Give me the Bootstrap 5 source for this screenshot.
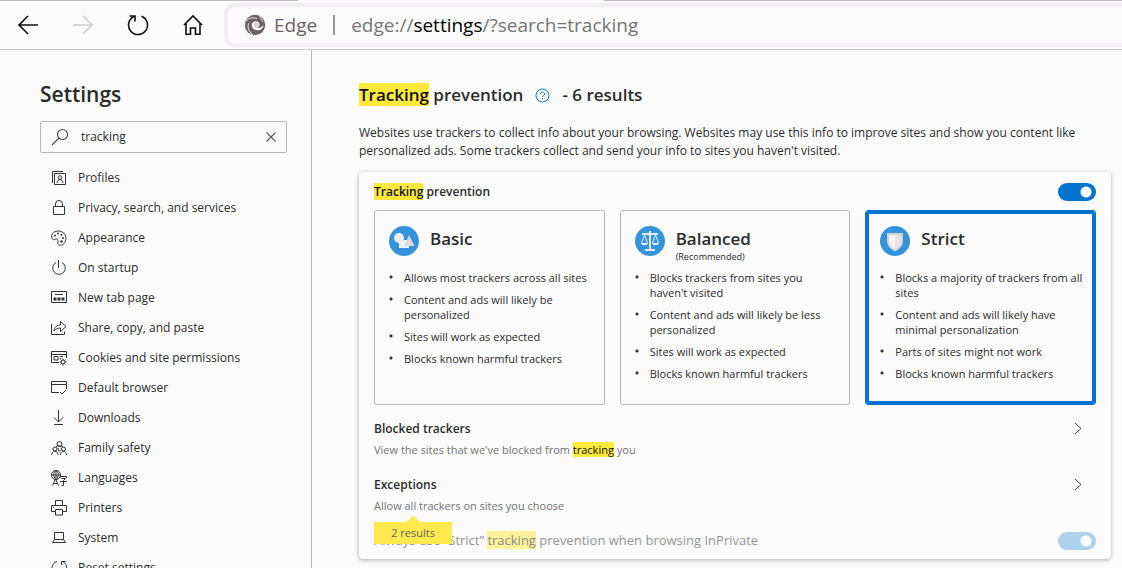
<!DOCTYPE html>
<html lang="en">
<head>
<meta charset="utf-8">
<meta name="viewport" content="width=device-width, initial-scale=1">
<title>Settings</title>
<link rel="stylesheet" href="https://cdn.jsdelivr.net/npm/bootstrap@5.3.0/dist/css/bootstrap.min.css">
<style>
  :root { --ink: #2b2b2b; --soft: #737373; --accent: #0072cf; --hit: #ffe93b; }
  html, body { height: 100%; }
  body { font-family: "Open Sans", "Noto Sans", sans-serif; font-size: 12px; line-height: 18px; color: var(--ink); background: #fbfbfb; }
  svg { display: block; flex: none; fill: none; }
  svg:not([stroke]) { stroke: currentColor; }

  .tab-edge { height: 1px; }
  .tab-edge .line { background: #bdbdbd; }
  .tab-edge .line-left { width: 298px; }
  .tab-edge .gap { width: 306px; }
  .toolbar { height: 49px; border-bottom: 1px solid #ccc; }
  .tool-btn { width: 55px; height: 48px; color: #111; padding: 0; border: 0; background: none; display: flex; align-items: center; justify-content: center; }
  .tool-btn:disabled { color: #ccc; }
  .address { height: 44px; border: 4px solid #f1edf1; border-right: 0; border-radius: 10px 0 0 10px; font-size: 19px; line-height: 28px; color: #757575; padding-left: 16px; margin-left: 4px; }
  .address .site { color: #6b6067; }
  .address .bar { width: 2px; height: 20px; background: #949494; }
  .address b { font-weight: 400; color: #000; }

  .side { width: 312px; border-right: 1px solid #b8b8b8; padding: 30px 24px 0 40px; }
  .side h1 { font-size: 21px; line-height: 28px; font-weight: 600; margin: 0 0 13px; }
  .search { height: 32px; border: 1px solid #b8b8b8; border-radius: 2px; padding: 0 9px 0 10px; }
  .search input { font-size: 12px; color: var(--ink); border: 0; background: none; outline: 0; padding: 0; min-width: 0; }
  .search button { border: 0; background: none; padding: 0; color: #555; }
  .side nav { margin-top: 10px; }
  .side nav a { height: 30px; color: var(--ink); text-decoration: none; gap: 11px; padding-left: 11px; }
  .side nav svg { stroke: #333; }

  .content { padding: 32px 11px 0 47px; }
  .content h2 { font-size: 17px; line-height: 26px; font-weight: 600; margin: 0 0 16px; }
  .hit { background: var(--hit); color: #111; padding: 0; }
  .panel { border-radius: 4px; box-shadow: 0 1px 4px rgba(0,0,0,.32); padding: 0 15px 8px; margin-top: 12px; }
  .panel-head { padding: 9px 0 8px; }
  .caption { font-size: 12px; line-height: 21px; font-weight: 600; }
  .form-switch .form-check-input { width: 38px; height: 18px; margin: 0; float: none; border: 0; background-color: var(--accent); box-shadow: none; }
  .form-switch .form-check-input:checked { background-image: radial-gradient(circle at 28px 9px, #fff 5px, transparent 6px); background-position: 0 0; background-size: 100% 100%; }
  .form-switch .form-check-input:disabled { opacity: .3; }

  .levels { display: grid; grid-template-columns: repeat(3, 1fr); gap: 15px; }
  .level { border: 1px solid #b8b8b8; border-radius: 3px; min-height: 195px; padding: 15px 8px 15px 14px; cursor: pointer; }
  .level:has(input:checked) { border-color: var(--accent); box-shadow: inset 0 0 0 3px var(--accent); }
  .level-head { min-height: 44px; gap: 11px; }
  .level-name { font-size: 17px; line-height: 25px; font-weight: 600; }
  .level-note { font-size: 9px; line-height: 11px; }
  .level ul { margin: 0; padding: 0; list-style: none; font-size: 11px; line-height: 15px; }
  .level li { padding-left: 15px; margin-bottom: 7px; background: radial-gradient(circle at 2px 7px, #333 1px, transparent 2px) no-repeat; }

  .entry { color: var(--ink); text-decoration: none; margin-bottom: 14px; }
  .levels + .entry { margin-top: 13px; }
  .entry-note { font-size: 11px; line-height: 21px; color: var(--soft); }
  .dimmed { font-size: 13px; line-height: 21px; opacity: .5; }
  .callout { left: 0; top: 48px; width: 78px; height: 22px; font-size: 11px; line-height: 22px; text-align: center; color: #666; background: #ffe94c; z-index: 1; }
  .callout::before { content: ""; position: absolute; left: 32px; top: -6px; border: 7px solid transparent; border-top: 0; border-bottom: 6px solid #ffe94c; }
  .page { min-height: 0; }
</style>
</head>
<body class="d-flex flex-column overflow-hidden">
<header>
  <div class="tab-edge d-flex"><div class="line line-left"></div><div class="gap"></div><div class="line flex-grow-1"></div></div>
  <div class="toolbar d-flex align-items-center">
    <button class="tool-btn" aria-label="Back"><svg width="22" height="22" stroke-width="1.6"><path d="M21 11H2M11 2L2 11l9 9"/></svg></button>
    <button class="tool-btn" aria-label="Forward" disabled><svg width="22" height="22" stroke-width="1.6"><path d="M1 11h19M11 2l9 9-9 9"/></svg></button>
    <button class="tool-btn" aria-label="Refresh"><svg width="22" height="22" stroke-width="1.6"><path d="M14.500 2.200a9.500 9.500 0 1 1-7.600.3M2.500 2h5.500v5.500"/></svg></button>
    <button class="tool-btn" aria-label="Home"><svg width="20" height="22" stroke-width="1.6"><path d="M1 11l9-9 9 9M3 9.500V20.200h4.500v-6.200h5v6.200H17V9.500"/></svg></button>
    <div class="address flex-grow-1 d-flex align-items-center">
      <svg width="22" height="22" viewBox="0 0 22 22" stroke="none"><circle cx="11" cy="11" r="10.200" fill="#6b6067"/><path d="M10.500 7.500c2.200-.8 4.600.4 5 2.600.3 1.800-.7 3.300-2.200 4 2.700 0 4.900-1.200 6.200-3.200-.2 3.300-3 5.700-6.400 5.300-3.100-.3-5.400-2.500-5.300-5.200.1-1.700 1.100-3 2.700-3.500z" fill="#fbfbfb"/><path d="M10.500 8.200c2.200-.8 4.200.7 4 2.700-.1 1.600-1.200 2.700-2.600 3.300-1.800-1-2.800-3.500-1.400-6z" fill="#6b6067" opacity=".25"/><path d="M2.500 7c2-3 6.500-4.200 10.500-2.200M4.600 9.500c-1.500 4 .3 8.300 3.900 10.700M15 2.500c2 1.300 3.200 3.300 3.400 5.500" stroke="#fbfbfb" stroke-width=".9"/></svg>
      <span class="site ms-2">Edge</span><span class="bar mx-3"></span><span>edge://<b>settings</b>/?search=tracking</span>
    </div>
  </div>
</header>
<div class="page d-flex flex-grow-1">
  <aside class="side flex-shrink-0">
    <h1>Settings</h1>
    <div class="search d-flex align-items-center">
      <svg class="me-2" width="18" height="18" stroke="#444" stroke-width="1.100"><circle cx="11.500" cy="6.500" r="5"/><path d="M8 10L1 17"/></svg>
      <input class="flex-grow-1 ms-1" type="text" value="tracking" aria-label="Search settings">
      <button aria-label="Clear search"><svg width="12" height="12" stroke-width="1.100"><path d="M1.500 1.500l9 9m0-9l-9 9"/></svg></button>
    </div>
    <nav>
      <a class="d-flex align-items-center" href="#"><svg width="16" height="16"><path d="M3.500 3.500h11v11h-11z"/><path d="M12 1.500H1.500V13" /><circle cx="9" cy="7.500" r="1.800"/><path d="M6 13c.2-4.500 5.800-4.500 6 0"/></svg>Profiles</a>
      <a class="d-flex align-items-center" href="#"><svg width="16" height="16"><path d="M2.500 6.500h11v8h-11zM4.500 6.500V4a3.500 3.500 0 0 1 7 0v2.500"/></svg>Privacy, search, and services</a>
      <a class="d-flex align-items-center" href="#"><svg width="16" height="16"><path d="M.8 5C2 .5 9-.2 12.700 3c3.600 3.500 2.500 9.500-1 11.700-3.200 1.500-5.400-.2-4.800-2.700.5-2.500-.6-3.700-2.600-2.700C2 10.500.2 9 .8 5z"/><g fill="#333" stroke="none"><circle cx="4" cy="5.500" r="1"/><circle cx="7" cy="3.500" r="1"/><circle cx="10.500" cy="4.800" r="1"/><circle cx="12" cy="8" r="1"/><circle cx="10.500" cy="11.500" r="1.200"/></g></svg>Appearance</a>
      <a class="d-flex align-items-center" href="#"><svg width="16" height="16"><path d="M5 2.500a6.300 6.300 0 1 0 6 0M7.500 0v8"/></svg>On startup</a>
      <a class="d-flex align-items-center" href="#"><svg width="16" height="16"><path d="M.5 1.500h15v11H.5zM4 4.500h8"/><path d="M2.500 9h3m1 0h3m1 0h3" stroke-width="3"/></svg>New tab page</a>
      <a class="d-flex align-items-center" href="#"><svg width="16" height="16"><path d="M.5 4v10.500h13v-3M3 11c.3-4 3-6 6.500-6V1.500L15 6.500l-5.500 5V8C6.500 8 4.500 9 3 11z"/></svg>Share, copy, and paste</a>
      <a class="d-flex align-items-center" href="#"><svg width="16" height="16"><path d="M8 12.500H.5v-11h15V8M.5 4.500h15M3 6.500h4v3.500H3zM9 6.500h3M9 8.500h1"/><circle cx="12" cy="12" r="2"/><path d="M12 8.500V10m0 4v1.500M8.700 12h1.500m4 0h1.500M9.500 9.500l1 1m3 3l1 1m0-5l-1 1m-3 3l-1 1"/></svg>Cookies and site permissions</a>
      <a class="d-flex align-items-center" href="#"><svg width="16" height="16"><path d="M8 12.500H.5v-11h15V9M.5 4.500h15M9 12l2 2 4-4"/></svg>Default browser</a>
      <a class="d-flex align-items-center" href="#"><svg width="16" height="16"><path d="M7.500 0v12M3 7.500L7.500 12 12 7.500M3 14.500h9"/></svg>Downloads</a>
      <a class="d-flex align-items-center" href="#"><svg width="16" height="16"><circle cx="8.500" cy="4" r="2.500"/><circle cx="4" cy="9" r="2"/><circle cx="12.500" cy="9" r="2"/><path d="M.7 15c0-5 6.300-5 6.300 0M9.500 15c0-5 6-5 6 0M5 6.500c2-1 5-1 7 .3M7 8l1 3.500 2-2"/></svg>Family safety</a>
      <a class="d-flex align-items-center" href="#"><svg width="16" height="16"><circle cx="5" cy="5" r="4.500"/><path d="M.5 5h9M5 .5v9M5 .5c-3 2-3 6 0 9M5 .5c3 2 3 6 0 9M1.500 15.500L4.500 9l3 6.500M2.500 13.500h4M9 8V6.500h6.500V8M10.500 8.500h4l-2 2v5h-2M9 11.500h7"/></svg>Languages</a>
      <a class="d-flex align-items-center" href="#"><svg width="16" height="16"><path d="M4.500 6V.5h7V6M4 11.500H.5v-6h15v6H12M4.500 9.500h7v5.500h-7zM2 7.500h1"/></svg>Printers</a>
      <a class="d-flex align-items-center" href="#"><svg width="16" height="16"><path d="M3.500 2.500h9v7h-9zM3.500 9.500L1.500 12.500h13l-2-3"/></svg>System</a>
      <a class="d-flex align-items-center" href="#"><svg width="16" height="16"><path d="M6 1.500A6.800 6.800 0 0 0 5 14.300M11.500 1.500A6.800 6.800 0 0 1 11 14.300M10.500 5V1.500h4"/></svg>Reset settings</a>
    </nav>
  </aside>

  <main class="content flex-grow-1">
    <h2 class="d-flex align-items-center"><span><mark class="hit">Tracking</mark> prevention</span>
      <a href="#" class="mx-2 px-1" aria-label="Help"><svg width="15" height="15" stroke="#0072cf"><circle cx="7.500" cy="7.500" r="6.500"/><path d="M5.500 6c0-2.700 4-2.600 4 0 0 1.500-2 1.500-2 3.200M7.500 10.200v1.300"/></svg></a>
      <span>- 6 results</span></h2>
    <p class="mb-0">Websites use trackers to collect info about your browsing. Websites may use this info to improve sites and show you content like personalized ads. Some trackers collect and send your info to sites you haven't visited.</p>
    <section class="panel">
      <div class="panel-head d-flex align-items-center justify-content-between form-switch">
        <label class="caption" for="prevent"><mark class="hit">Tracking</mark> prevention</label>
        <input class="form-check-input" type="checkbox" role="switch" id="prevent" checked>
      </div>
      <div class="levels">
        <label class="level">
          <input class="visually-hidden" type="radio" name="level">
          <span class="level-head d-flex"><svg width="30" height="30" stroke="none"><circle cx="15" cy="15" r="15" fill="#3394dd"/><circle cx="10" cy="12" r="5" fill="#f1eff3"/><path d="M10 14h10v8H10z" fill="#f1eff3"/><path d="M20 9l5.500 11h-10z" fill="#dcdada"/></svg>
          <span class="level-name">Basic</span></span>
          <ul><li>Allows most trackers across all sites</li><li>Content and ads will likely be personalized</li><li>Sites will work as expected</li><li>Blocks known harmful trackers</li></ul>
        </label>
        <label class="level">
          <input class="visually-hidden" type="radio" name="level">
          <span class="level-head d-flex"><svg width="30" height="30" stroke="none"><circle cx="15" cy="15" r="15" fill="#3394dd"/><g stroke="#e9edf3"><path d="M7 8h16M15 5v18M10 24h10" stroke-width="2"/><path d="M9.500 9l-3 8M9.500 9l3 8M20.500 9l-3 8M20.500 9l3 8"/><path d="M6 17h7c-.5 3-6.500 3-7 0zM17 17h7c-.5 3-6.500 3-7 0z" fill="#e9edf3" stroke="none"/></g></svg>
          <span class="d-flex flex-column"><span class="level-name">Balanced</span><span class="level-note">(Recommended)</span></span></span>
          <ul><li>Blocks trackers from sites you haven't visited</li><li>Content and ads will likely be less personalized</li><li>Sites will work as expected</li><li>Blocks known harmful trackers</li></ul>
        </label>
        <label class="level">
          <input class="visually-hidden" type="radio" name="level" checked>
          <span class="level-head d-flex"><svg width="30" height="30" stroke="none"><circle cx="15" cy="15" r="15" fill="#3394dd"/><path d="M7 7h16v8c0 5-4 8.500-8 10.500C11 23.500 7 20 7 15z" fill="#d3d2d6"/><path d="M9 9h12v6c0 4-3 6.500-6 8.200C12 21.500 9 19 9 15z" fill="#f4f3f6"/><path d="M15 9h6v6c0 4-3 6.500-6 8.200z" fill="#e6e4e8"/></svg>
          <span class="level-name">Strict</span></span>
          <ul><li>Blocks a majority of trackers from all sites</li><li>Content and ads will likely have minimal personalization</li><li>Parts of sites might not work</li><li>Blocks known harmful trackers</li></ul>
        </label>
      </div>
      <a class="entry d-flex justify-content-between" href="#"><span><span class="caption d-block">Blocked trackers</span><span class="entry-note d-block">View the sites that we've blocked from <mark class="hit">tracking</mark> you</span></span>
        <svg class="me-2 mt-1" width="20" height="13" stroke="#444"><path d="M7 1l6 5.500L7 12"/></svg></a>
      <div class="position-relative">
        <a class="entry d-flex justify-content-between" href="#"><span><span class="caption d-block">Exceptions</span><span class="entry-note d-block">Allow all trackers on sites you choose</span></span>
          <svg class="me-2 mt-1" width="20" height="13" stroke="#444"><path d="M7 1l6 5.500L7 12"/></svg></a>
        <div class="callout position-absolute">2 results</div>
      </div>
      <div class="d-flex align-items-center justify-content-between form-switch ps-0">
        <label class="dimmed" for="inprivate">Always use “Strict” <mark class="hit">tracking</mark> prevention when browsing InPrivate</label>
        <input class="form-check-input" type="checkbox" role="switch" id="inprivate" checked disabled>
      </div>
    </section>
  </main>
</div>
<script src="https://cdn.jsdelivr.net/npm/bootstrap@5.3.0/dist/js/bootstrap.bundle.min.js"></script>
</body>
</html>
